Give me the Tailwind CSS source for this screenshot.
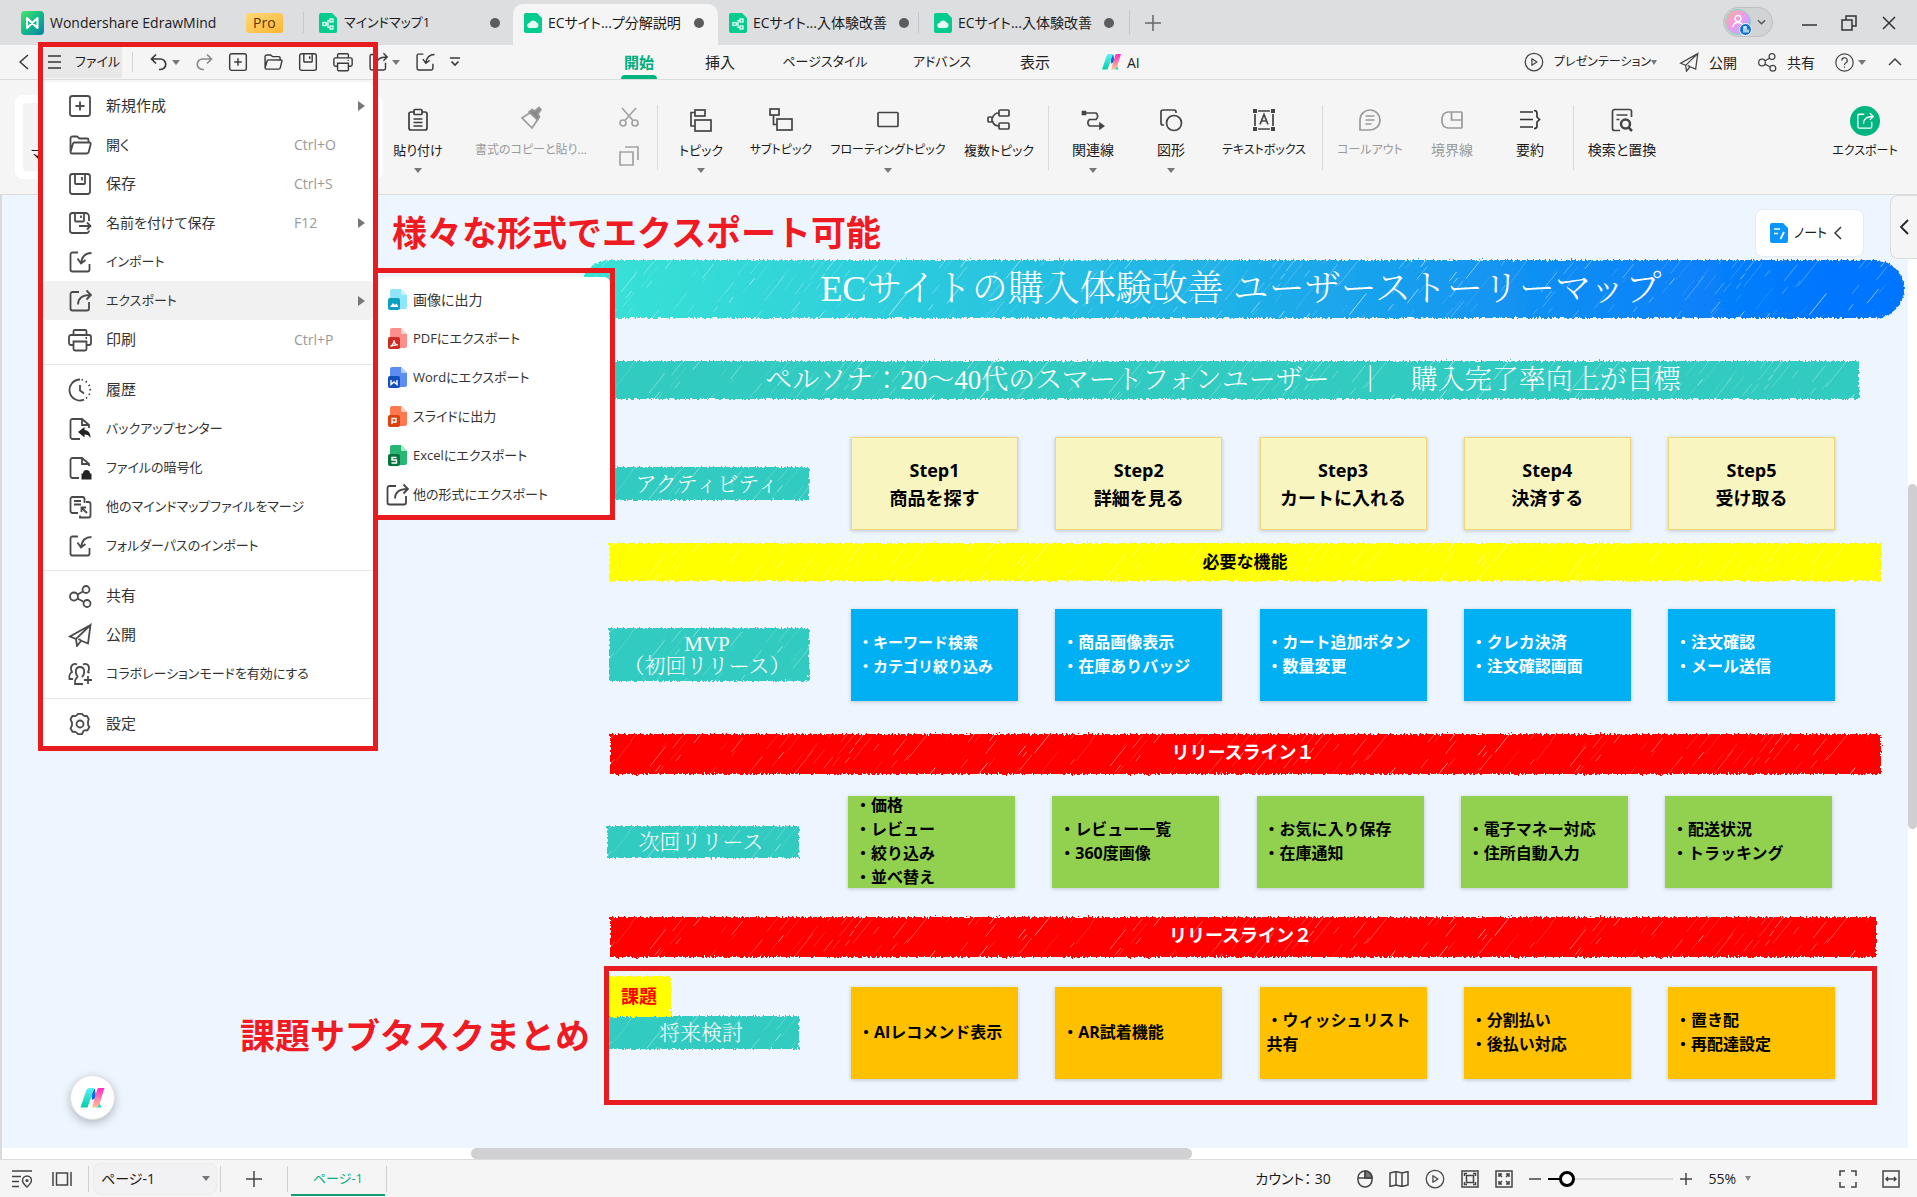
<!DOCTYPE html>
<html lang="ja">
<head>
<meta charset="utf-8">
<title>Wondershare EdrawMind</title>
<script src="https://cdn.jsdelivr.net/npm/@tailwindcss/browser@4"></script>
</head>
<body class="h-screen overflow-hidden bg-[#f5f5f5] font-['Open_Sans','Noto_Sans_CJK_JP',sans-serif] text-[#1a1a1a]">

<!-- shared icons -->
<svg class="absolute size-0" aria-hidden="true">
  <defs>
    <filter id="rough" x="-2%" y="-20%" width="104%" height="140%">
      <feTurbulence type="fractalNoise" baseFrequency="0.5 0.3" numOctaves="3" seed="4"/>
      <feDisplacementMap in="SourceGraphic" scale="5" xChannelSelector="R" yChannelSelector="G"/>
    </filter>
    <pattern id="streaks" width="460" height="64" patternUnits="userSpaceOnUse"></pattern>
    <linearGradient id="gTitle" x1="0" x2="1"><stop offset="0" stop-color="#38e2d4"/><stop offset=".12" stop-color="#33d9d8"/><stop offset=".5" stop-color="#1fb0e8"/><stop offset=".75" stop-color="#0f8cf5"/><stop offset=".95" stop-color="#0075ff"/></linearGradient>
    <linearGradient id="gLogo" x1="0" y1="0" x2="1" y2="1"><stop offset="0" stop-color="#4be36a"/><stop offset=".5" stop-color="#12b98a"/><stop offset="1" stop-color="#0a7fa8"/></linearGradient>
    <linearGradient id="gT" x1="0" y1="0" x2="0" y2="1"><stop offset="0" stop-color="#5ff0f5"/><stop offset="1" stop-color="#04cfa8"/></linearGradient>
    <linearGradient id="gP" x1="0" y1="0" x2="0" y2="1"><stop offset="0" stop-color="#fb2bc8"/><stop offset="1" stop-color="#ffc78f"/></linearGradient>
    <linearGradient id="gA" x1="0" y1="0" x2="1" y2="1"><stop offset="0" stop-color="#f9b08e"/><stop offset=".5" stop-color="#ef9bf0"/><stop offset="1" stop-color="#8fb8ff"/></linearGradient>
  </defs>
  <symbol id="i-new" viewBox="0 0 24 24"><rect x="2" y="2" width="20" height="20" rx="2.5"/><path d="M12 7.5v9M7.500 12h9"/></symbol>
  <symbol id="i-open" viewBox="0 0 24 24"><path d="M2.500 19V5.500a2 2 0 0 1 2-2h4.500l2.500 2h7.500a1.500 1.500 0 0 1 1.500 1.500v2.500M2.500 19l2.500-8.500a1.500 1.500 0 0 1 1.400-1H21.500a1.200 1.200 0 0 1 1.200 1.500l-2 8a2 2 0 0 1-1.900 1.500H4a1.500 1.500 0 0 1-1.500-1.500z"/></symbol>
  <symbol id="i-save" viewBox="0 0 24 24"><rect x="2" y="2" width="20" height="20" rx="2.500"/><path d="M7 2v9a1 1 0 0 0 1 1h8a1 1 0 0 0 1-1V2M14 5v3.500"/></symbol>
  <symbol id="i-saveas" viewBox="0 0 24 24"><path d="M21 10V5.500a3.500 3.500 0 0 0-3.500-3.500h-13A2.500 2.500 0 0 0 2 4.500v15A2.500 2.500 0 0 0 4.500 22h14a2.500 2.500 0 0 0 2.500-2.500M7 2v7.500a1 1 0 0 0 1 1h7a1 1 0 0 0 1-1V2M13 4.500V7M11 15h11M19 11.500l3.500 3.500-3.500 3.500"/></symbol>
  <symbol id="i-import" viewBox="0 0 24 24"><path d="M10 2.500H4.500a2 2 0 0 0-2 2v15a2 2 0 0 0 2 2h15a2 2 0 0 0 2-2V14M23.500 3c-5 0-9.500 3-10.500 10M9.500 8.500l3.500 5 4.500-3.500"/></symbol>
  <symbol id="i-export" viewBox="0 0 24 24"><path d="M11 3H4.500a2 2 0 0 0-2 2v14.500a2 2 0 0 0 2 2h14.500a2 2 0 0 0 2-2V13M10 15.500C10 9.500 14 6 22.500 6M18.500 1.500L23 6l-4.500 4.500"/></symbol>
  <symbol id="i-print" viewBox="0 0 24 24"><path d="M5.500 17H3a2 2 0 0 1-2-2V9a2 2 0 0 1 2-2h18a2 2 0 0 1 2 2v6a2 2 0 0 1-2 2h-2.500M5.500 7V3.500a1.500 1.500 0 0 1 1.500-1.500h10a1.500 1.500 0 0 1 1.500 1.500V7M5.500 13.500h13V21a1.500 1.500 0 0 1-1.500 1.500H7A1.500 1.500 0 0 1 5.500 21zM17.500 10h1.500"/></symbol>
  <symbol id="i-history" viewBox="0 0 24 24"><path d="M12 1.500a10.500 10.500 0 1 0 4 20.200M12 7v5.500l4 3"/><path stroke-dasharray="1.500 3" d="M13.500 1.600A10.500 10.500 0 0 1 17 21"/></symbol>
  <symbol id="i-backup" viewBox="0 0 24 24"><path d="M12 22H4.500a2 2 0 0 1-2-2V4a2 2 0 0 1 2-2h9.500l7 6v3M14 2.500V8h6.500"/><path fill="currentColor" stroke="none" d="M10 15l6.500-5v3c4 .5 6 3 6 8-1.500-2.500-3-3.500-6-3.500v3z"/></symbol>
  <symbol id="i-lock" viewBox="0 0 24 24"><path d="M11 22H4.500a2 2 0 0 1-2-2V4a2 2 0 0 1 2-2h9.500l7 6v2M14 2.500V8h6.500"/><path fill="currentColor" stroke="none" d="M13.500 17.500h1.500a3.500 3.500 0 0 1 7 0h1.500v6h-10z"/></symbol>
  <symbol id="i-merge" viewBox="0 0 24 24"><path d="M10 18H4.500a2 2 0 0 1-2-2V4a2 2 0 0 1 2-2h10a2 2 0 0 1 2 2v4M6 6h7M6 9.500h7M18 7h2.500a2 2 0 0 1 2 2v11.500a2 2 0 0 1-2 2H12v-2M19 18l-5-5M13.500 17v-4.500H18"/></symbol>
  <symbol id="i-share" viewBox="0 0 24 24"><circle cx="6" cy="12.500" r="4"/><circle cx="18" cy="5.500" r="3.500"/><circle cx="19" cy="19.500" r="3.500"/><path d="M9.500 10.500l5.500-3M9.500 14.500l6.500 3.500"/></symbol>
  <symbol id="i-send" viewBox="0 0 24 24"><path d="M22.500 2L2 13.500l6 2.500L22.500 2l-2.500 18.500-6-2.500-3.500-2M8 16l1 7 4-5"/></symbol>
  <symbol id="i-collab" viewBox="0 0 24 24"><path d="M9 2.500C6 1 2.500 3 3 7c.3 2 1 3 1 3-2.500 1.500-3 5-2.500 7H5M15 2.500c3-1.500 6.500 0 6 4.500-.3 2-1 3-1 3l1.500 1M10 15c-3-3-3.500-10 2-10s5 7 2 10M10 15c-2 1-3.500 3-3 7h8M20 14v8M16 18h8"/></symbol>
  <symbol id="i-gear" viewBox="0 0 24 24"><path d="M8.500 3.500L10 1.800h4l1.500 1.700 1 .6 2.300-.3 2 3.500-.8 2.100v1.300l.1 2.600 1.400 1.500-2 3.500-2.500-.1-1.500.8L14 22.200h-4l-1.500-1.700-1.500-.8-2.500.1-2-3.500L4 13.500v-3L2.500 7.300l2-3.500 2.500.3z" stroke-linejoin="round"/><circle cx="12" cy="12" r="3.500"/></symbol>
  <symbol id="i-play" viewBox="0 0 24 24"><circle cx="12" cy="12" r="10.500"/><path d="M9.500 8v8l6-4z" stroke-linejoin="round"/></symbol>
  <symbol id="ai" viewBox="0 0 24 20"><path fill="#0a6bd8" d="M10.500 1h4l1 9-4 2z"/><path fill="url(#gT)" d="M9 0h5L7 19.500H0L5.500 3Q6.500 0 9 0z"/><path fill="#12dcd0" d="M17 10l4 9.500h-5z"/><path fill="url(#gP)" d="M18 0h6l-5 16q-1.500 3.500-4 3.500h-3.500L16.500 2Q17 0 18 0z"/></symbol>
  <symbol id="doc-map" viewBox="0 0 18 20"><path fill="#04cb8e" d="M2 0h11l5 5v13a2 2 0 0 1-2 2H2a2 2 0 0 1-2-2V2a2 2 0 0 1 2-2z"/><g fill="none" stroke="#fff" stroke-width="1.200"><path d="M7 11h2M11 7.500H9v7h2"/><rect x="4" y="9.500" width="3" height="3"/><rect x="11" y="6" width="3" height="3"/><rect x="11" y="13" width="3" height="3"/></g></symbol>
  <symbol id="doc-cloud" viewBox="0 0 18 20"><path fill="#04cb8e" d="M2 0h11l5 5v13a2 2 0 0 1-2 2H2a2 2 0 0 1-2-2V2a2 2 0 0 1 2-2z"/><path fill="#e6fbf3" d="M6 15a2.500 2.500 0 0 1-.5-5 3.800 3.800 0 0 1 7-.5A2.800 2.800 0 0 1 12 15z"/></symbol>
</svg>

<div class="relative flex h-full flex-col">

  <!-- title bar -->
  <header class="flex h-[45px] shrink-0 items-stretch bg-[#dddee0] text-[14px] [font-feature-settings:'palt']">
    <div class="flex w-[303px] items-center pl-[21px]">
      <svg class="h-6 w-[23px]" viewBox="0 0 23 24"><rect width="23" height="24" rx="4" fill="url(#gLogo)"/><path d="M6 7v10l10.500-10v10L6 7z" fill="none" stroke="#fff" stroke-width="2" stroke-linejoin="round"/></svg>
      <span class="ml-[6px] w-[196px] whitespace-nowrap">Wondershare EdrawMind</span>
      <span class="h-5 rounded-[3px] bg-linear-to-br from-[#ffd976] to-[#ffb52b] px-[7px] leading-5 font-medium text-[#5a3300]">Pro</span>
    </div>
    <div class="my-3 w-px bg-[#c6c7c9]"></div>
    <button class="flex w-[209px] items-center pl-[15px]"><svg class="h-5 w-[18px]"><use href="#doc-map"/></svg><span class="ml-[7px] flex-1 text-left text-[13px]">マインドマップ1</span><i class="mr-[13px] size-[10px] rounded-full bg-[#5c5c5c]"></i></button>
    <button class="mt-1 flex w-[205px] items-center rounded-t-[10px] bg-[#f5f5f5] pb-1 pl-[11px]"><svg class="h-5 w-[18px]"><use href="#doc-cloud"/></svg><span class="ml-[6px] flex-1 text-left whitespace-nowrap">ECサイト...プ分解説明</span><i class="mr-[14px] size-[10px] rounded-full bg-[#5c5c5c]"></i></button>
    <button class="flex w-[200px] items-center pl-[11px]"><svg class="h-5 w-[18px]"><use href="#doc-map"/></svg><span class="ml-[6px] flex-1 text-left whitespace-nowrap">ECサイト...入体験改善</span><i class="mr-[9px] size-[10px] rounded-full bg-[#5c5c5c]"></i></button>
    <div class="my-3 w-px bg-[#c6c7c9]"></div>
    <button class="flex w-[210px] items-center pl-[15px]"><svg class="h-5 w-[18px]"><use href="#doc-cloud"/></svg><span class="ml-[6px] flex-1 text-left whitespace-nowrap">ECサイト...入体験改善</span><i class="mr-[15px] size-[10px] rounded-full bg-[#5c5c5c]"></i></button>
    <div class="my-[10px] w-px bg-[#c6c7c9]"></div>
    <button class="flex w-[45px] items-center justify-center" aria-label="新しいタブ"><svg class="size-4" viewBox="0 0 16 16" stroke="#666" stroke-width="1.500"><path d="M8 0v16M0 8h16"/></svg></button>
    <div class="flex-1"></div>
    <button class="mt-[7px] flex h-[30px] w-[50px] items-center rounded-full border border-[#bfc0c2] bg-[#d2d3d5]" aria-label="アカウント">
      <svg class="h-[28px] w-[29px]" viewBox="0 0 29 28"><circle cx="14" cy="14" r="12.500" fill="url(#gA)" stroke="#7fd9c8"/><circle cx="14" cy="10.500" r="3" fill="none" stroke="#fff" stroke-width="1.300"/><path d="M9 19c0-6 10-6 10 0" fill="none" stroke="#fff" stroke-width="1.300"/><circle cx="21.500" cy="21.500" r="6" fill="#1272d8" stroke="#fff"/><path d="M20 24.500v-5.500h2v5.500M24 24.500v-3" stroke="#fff" stroke-width="1.300" fill="none"/></svg>
      <svg class="ml-[4px] h-2 w-[9px]" viewBox="0 0 10 8" fill="none" stroke="#555" stroke-width="1.500"><path d="M1 2l4 4 4-4"/></svg>
    </button>
    <button class="ml-[16px] w-[40px] pt-1" aria-label="最小化"><svg class="mx-auto h-4 w-[15px]" viewBox="0 0 15 16" stroke="#333" stroke-width="1.500"><path d="M0 8h15"/></svg></button>
    <button class="w-[40px]" aria-label="元に戻す"><svg class="mx-auto size-4" viewBox="0 0 16 16" fill="none" stroke="#333" stroke-width="1.500"><path d="M1 5h10v10H1zM5 5V1h10v10h-4"/></svg></button>
    <button class="mr-[8px] w-[40px]" aria-label="閉じる"><svg class="mx-auto size-[14px]" viewBox="0 0 14 14" stroke="#333" stroke-width="1.500"><path d="M1 1l12 12M13 1L1 13"/></svg></button>
  </header>

  <!-- menu bar -->
  <nav class="flex h-[35px] shrink-0 items-center border-b border-[#dcdcdc] text-[15px] text-[#222] [font-feature-settings:'palt']">
    <button class="ml-[19px] w-[25px]" aria-label="戻る"><svg class="h-4 w-[10px]" viewBox="0 0 10 16" fill="none" stroke="#333" stroke-width="1.500"><path d="M9 1L1 8l8 7"/></svg></button>
    <button class="flex h-[31px] w-[78px] items-center bg-[#e8e8e8] pl-[4px] text-[13px] whitespace-nowrap"><svg class="h-4 w-[13px] shrink-0" viewBox="0 0 13 16" stroke="#333" stroke-width="1.500"><path d="M0 2h13M0 8h13M0 14h13"/></svg><span class="ml-[14px]">ファイル</span></button>
    <div class="ml-[10px] h-5 w-px bg-[#d4d4d4]"></div>
    <div class="flex items-center text-[#3a3a3a] [&_svg]:fill-none [&_svg]:stroke-current [&_svg]:stroke-[1.700px]">
      <button class="ml-[17px]" aria-label="元に戻す"><svg class="size-[18px]" viewBox="0 0 18 18"><path d="M6 1.500L1.500 6 6 10.500M1.500 6h9a5 5 0 0 1 0 10.500H9"/></svg></button>
      <span class="ml-[4px] border-x-4 border-t-[5px] border-x-transparent border-t-[#777]"></span>
      <button class="ml-[15px] text-[#8a8a8a]" aria-label="やり直し"><svg class="size-[18px]" viewBox="0 0 18 18"><path d="M12 1.500L16.500 6 12 10.500M16.500 6H7.500a5 5 0 0 0 0 10.500H9"/></svg></button>
      <button class="ml-[15px]" aria-label="新規作成"><svg class="size-5"><use href="#i-new"/></svg></button>
      <button class="ml-[15px]" aria-label="開く"><svg class="size-5"><use href="#i-open"/></svg></button>
      <button class="ml-[15px]" aria-label="保存"><svg class="size-5"><use href="#i-save"/></svg></button>
      <button class="ml-[15px]" aria-label="印刷"><svg class="size-5"><use href="#i-print"/></svg></button>
      <button class="ml-[15px]" aria-label="エクスポート"><svg class="size-5"><use href="#i-export"/></svg></button>
      <span class="ml-[4px] border-x-4 border-t-[5px] border-x-transparent border-t-[#777]"></span>
      <button class="ml-[15px]" aria-label="インポート"><svg class="size-5"><use href="#i-import"/></svg></button>
      <button class="ml-[15px]" aria-label="カスタマイズ"><svg class="h-3 w-[10px]" viewBox="0 0 10 12"><path d="M0 2h10M1.500 5.500L5 9l3.500-3.500"/></svg></button>
    </div>
    <div class="ml-[139px] flex h-full items-stretch [&>button]:whitespace-nowrap">
      <button class="relative w-[80px] font-semibold text-[#00ad7c]">開始<span class="absolute bottom-0 left-[22px] h-1 w-[36px] rounded-t bg-[#00b482]"></span></button>
      <button class="w-[82px]">挿入</button>
      <button class="w-[128px] text-[13px]">ページスタイル</button>
      <button class="w-[106px] text-[13px]">アドバンス</button>
      <button class="w-[80px]">表示</button>
      <button class="ml-[15px] flex w-[80px] items-center gap-[6px] pl-[12px] text-[14px]"><svg class="h-4 w-[19px]"><use href="#ai"/></svg>AI</button>
    </div>
    <div class="flex-1"></div>
    <div class="flex items-center whitespace-nowrap text-[14px] [&_svg]:fill-none [&_svg]:stroke-[#444] [&_svg]:stroke-[1.500px]">
      <button class="flex items-center"><svg class="mr-[10px] size-5"><use href="#i-play"/></svg><span class="w-[94px] text-left text-[12px]">プレゼンテーション</span><span class="ml-[3px] border-x-[3px] border-t-[5px] border-x-transparent border-t-[#777]"></span></button>
      <button class="ml-[22px] flex items-center"><svg class="mr-[10px] size-5"><use href="#i-send"/></svg>公開</button>
      <button class="ml-[20px] flex items-center"><svg class="mr-[10px] size-5"><use href="#i-share"/></svg>共有</button>
      <button class="ml-[20px] flex items-center" aria-label="ヘルプ"><svg class="size-[19px]" viewBox="0 0 24 24"><circle cx="12" cy="12" r="11"/><path d="M8.500 9.500a3.500 3.500 0 1 1 5 3.200q-1.500.8-1.500 2.300M12 17v1.500"/></svg><span class="ml-1 border-x-4 border-t-[5px] border-x-transparent border-t-[#777]"></span></button>
      <button class="mr-[15px] ml-[22px]" aria-label="折りたたむ"><svg class="h-2 w-[14px]" viewBox="0 0 14 8"><path d="M1 7l6-6 6 6"/></svg></button>
    </div>
  </nav>

  <!-- ribbon -->
  <section class="flex h-[115px] shrink-0 border-b border-[#dcdcdc] text-[14px] [font-feature-settings:'palt'] [&_button]:whitespace-nowrap [&_svg]:fill-none [&_svg]:stroke-current [&_svg]:stroke-[1.700px]">
    <div class="my-[15px] ml-[15px] w-[368px] rounded-lg bg-white p-2"><button class="h-full w-[90px] rounded bg-[#f3f3f3] pt-8 pl-2 text-left">マインドマップ</button></div>
    <button class="flex w-[70px] flex-col items-center pt-[28px] text-[13px]"><svg class="size-6 text-[#3c3c3c]" viewBox="0 0 24 24"><rect x="3" y="4" width="18" height="18" rx="2"/><rect x="8" y="1.500" width="8" height="5" rx="1" class="fill-[#f5f5f5]"/><path d="M7.500 11h9M7.500 14.500h9M7.500 18h9"/></svg><span class="mt-[8px] leading-5">貼り付け</span><i class="mt-[8px] border-x-4 border-t-[5px] border-x-transparent border-t-[#777]"></i></button>
    <button class="flex w-[156px] flex-col items-center pt-[26px] text-[12px] text-[#9a9a9a]" disabled><svg class="size-6" viewBox="0 0 24 24"><path d="M3 12l9-6 7 7-6 9z"/><path fill="#888" d="M10 6l3-2.500 3 1.500 4-3.500 2 2-3 4.500 1.500 3-2 3z"/></svg><span class="mt-[10px] leading-5">書式のコピーと貼り...</span></button>
    <div class="flex w-[40px] flex-col items-center gap-[19px] pt-[27px] text-[#a3a3a3]">
      <button aria-label="切り取り" disabled><svg class="block size-5" viewBox="0 0 20 20"><circle cx="4" cy="16" r="3"/><circle cx="16" cy="16" r="3"/><path d="M3 1l11 12.500M17 1L6 13.500"/></svg></button>
      <button aria-label="コピー" disabled><svg class="block size-5" viewBox="0 0 20 20"><path d="M1 6h13v13H1zM6 1h13v13"/></svg></button>
    </div>
    <div class="mt-[25px] mr-[3px] ml-2 h-[65px] w-px bg-[#dadada]"></div>
    <button class="flex w-[80px] flex-col items-center pt-[28px]"><svg class="size-6 text-[#444]" viewBox="0 0 24 24"><rect x="6" y="2" width="10" height="6"/><rect x="6" y="12" width="16" height="11"/><path d="M6 4.500H2V18h4"/></svg><span class="mt-[8px] text-[13px] leading-5">トピック</span><i class="mt-[8px] border-x-4 border-t-[5px] border-x-transparent border-t-[#777]"></i></button>
    <button class="flex w-[80px] flex-col items-center pt-[28px]"><svg class="size-6 text-[#444]" viewBox="0 0 24 24"><rect x="1" y="1" width="9" height="6"/><rect x="8" y="11" width="15" height="11"/><path d="M4.500 7v9.500H8"/></svg><span class="mt-[8px] text-[12px] leading-5">サブトピック</span></button>
    <button class="flex w-[134px] flex-col items-center pt-[28px]"><svg class="size-6 text-[#444]" viewBox="0 0 24 24"><rect x="2" y="4.500" width="20" height="14" rx="1"/></svg><span class="mt-[8px] text-[12px] leading-5">フローティングトピック</span><i class="mt-[8px] border-x-4 border-t-[5px] border-x-transparent border-t-[#777]"></i></button>
    <button class="flex w-[88px] flex-col items-center pt-[28px]"><svg class="size-6 text-[#444]" viewBox="0 0 24 24"><rect x="12" y="2" width="10" height="6" rx="1"/><rect x="12" y="15" width="10" height="6" rx="1"/><rect x="1" y="9" width="4" height="5" rx="1"/><path d="M12 5C7 5 6 8 5.500 10M12 18c-5 0-6-3-6.500-5"/></svg><span class="mt-[8px] text-[13px] leading-5">複数トピック</span></button>
    <div class="mr-[6px] ml-[5px] mt-[25px] h-[65px] w-px bg-[#dadada]"></div>
    <button class="flex w-[76px] flex-col items-center pt-[28px]"><svg class="size-6 text-[#444]" viewBox="0 0 24 24"><path d="M3 5h12a4 4 0 0 1 0 6.500H8.500a4 4 0 0 0 0 6.500H21"/><path class="fill-[#444]" d="M19 15.500l3.500 2.500-3.500 2.500zM1.500 3.500h3v3h-3z"/></svg><span class="mt-[8px] leading-5">関連線</span><i class="mt-[8px] border-x-4 border-t-[5px] border-x-transparent border-t-[#777]"></i></button>
    <button class="flex w-[80px] flex-col items-center pt-[28px]"><svg class="size-6 text-[#444]" viewBox="0 0 24 24"><path d="M5 17H4a2 2 0 0 1-2-2V4a2 2 0 0 1 2-2h11a2 2 0 0 1 2 2v1"/><circle cx="15" cy="15" r="7.500"/></svg><span class="mt-[8px] leading-5">図形</span><i class="mt-[8px] border-x-4 border-t-[5px] border-x-transparent border-t-[#777]"></i></button>
    <button class="flex w-[106px] flex-col items-center pt-[28px]"><svg class="size-6 text-[#444]" viewBox="0 0 24 24"><path d="M6 3h12M6 21h12M3 6v12M21 6v12"/><path d="M8 16.500l4-10 4 10M9.500 13h5"/><path class="fill-[#444] stroke-none" d="M1 1h4v4H1zM19 1h4v4h-4zM1 19h4v4H1zM19 19h4v4h-4z"/></svg><span class="mt-[8px] text-[12px] leading-5">テキストボックス</span></button>
    <div class="mx-[5px] mt-[25px] h-[65px] w-px bg-[#dadada]"></div>
    <button class="flex w-[84px] flex-col items-center pt-[28px] text-[#9a9a9a]" disabled><svg class="size-6" viewBox="0 0 24 24"><path d="M2 22V11.500A10 10 0 1 1 12 22zM7.500 8h9M7.500 12h9M7.500 16h6"/></svg><span class="mt-[8px] text-[12px] leading-5">コールアウト</span></button>
    <button class="flex w-[80px] flex-col items-center pt-[28px] text-[#9a9a9a]" disabled><svg class="size-6" viewBox="0 0 24 24"><path d="M8 4h13a1 1 0 0 1 1 1v14a1 1 0 0 1-1 1H8a7 7 0 0 1-6-6v-4a7 7 0 0 1 6-6zM11.500 4v8H22"/></svg><span class="mt-[8px] leading-5">境界線</span></button>
    <button class="flex w-[76px] flex-col items-center pt-[28px]"><svg class="size-6 text-[#333]" viewBox="0 0 24 24"><path d="M2 4h13M2 11.500h13M2 19h13M16 2.500q3 0 3 2.500v4l2.500 2.500L19 14v4q0 2.500-3 2.500"/></svg><span class="mt-[8px] leading-5">要約</span></button>
    <div class="mr-1 ml-[5px] mt-[25px] h-[65px] w-px bg-[#dadada]"></div>
    <button class="flex w-[88px] flex-col items-center pt-[28px]"><svg class="size-6 text-[#444]" viewBox="0 0 24 24"><path d="M21.500 9V3.500a2 2 0 0 0-2-2h-15a2 2 0 0 0-2 2v17a2 2 0 0 0 2 2H10M6.500 7h11M6.500 11.500h3"/><circle cx="15.500" cy="16" r="4.500" stroke-width="2.500"/><path d="M18.500 19.500L22 23" stroke-width="2.500"/></svg><span class="mt-[8px] leading-5">検索と置換</span></button>
    <div class="flex-1"></div>
    <button class="mr-[10px] flex w-[84px] flex-col items-center pt-[26px]"><span class="flex size-[30px] items-center justify-center rounded-full bg-[#00b580] text-white"><svg class="mb-px size-[18px]"><use href="#i-export"/></svg></span><span class="mt-[5px] text-[12px] leading-5">エクスポート</span></button>
  </section>

  <!-- canvas -->
  <main class="relative min-h-0 flex-1 overflow-hidden bg-[#edf5ff] shadow-[inset_2px_0_#dadada]">
    <!-- banner -->
    <div class="absolute top-[65px] left-[581px] flex h-[58px] w-[1323px] items-center justify-center font-['Liberation_Serif','Noto_Serif_CJK_JP','Noto_Sans_CJK_JP',serif] text-[36px] font-light text-white">
      <svg class="absolute inset-0 size-full overflow-visible"><rect width="100%" height="100%" rx="29" fill="url(#gTitle)" filter="url(#rough)"/><rect width="100%" height="100%" rx="29" fill="url(#streaks)"/></svg>
      <h1 class="relative pr-[3px] whitespace-nowrap">ECサイトの購入体験改善 ユーザーストーリーマップ</h1>
    </div>
    <div class="absolute top-[166px] left-[609px] flex h-[38px] w-[1250px] items-center justify-center font-['Liberation_Serif','Noto_Serif_CJK_JP','Noto_Sans_CJK_JP',serif] text-[27px] font-light text-white">
      <svg class="absolute inset-0 size-full overflow-visible"><rect width="100%" height="100%" fill="#31cbc1" filter="url(#rough)"/><rect width="100%" height="100%" fill="url(#streaks)"/></svg>
      <p class="relative pr-[22px] whitespace-nowrap">ペルソナ：20～40代のスマートフォンユーザー　｜　購入完了率向上が目標</p>
    </div>

    <!-- row labels -->
    <div class="font-['Liberation_Serif','Noto_Serif_CJK_JP','Noto_Sans_CJK_JP',serif] text-[21px] leading-[22px] font-light text-white">
      <div class="absolute top-[272px] left-[609px] flex h-[33px] w-[200px] items-center justify-center pr-1"><svg class="absolute inset-0 size-full overflow-visible"><rect width="100%" height="100%" fill="#31cbc1" filter="url(#rough)"/><rect width="100%" height="100%" fill="url(#streaks)"/></svg><span class="relative">アクティビティ</span></div>
      <div class="absolute top-[433px] left-[609px] flex h-[53px] w-[200px] items-center justify-center pr-1 text-center"><svg class="absolute inset-0 size-full overflow-visible"><rect width="100%" height="100%" fill="#31cbc1" filter="url(#rough)"/><rect width="100%" height="100%" fill="url(#streaks)"/></svg><span class="relative">MVP<br>（初回リリース）</span></div>
      <div class="absolute top-[631px] left-[607px] flex h-[32px] w-[192px] items-center justify-center pr-1"><svg class="absolute inset-0 size-full overflow-visible"><rect width="100%" height="100%" fill="#31cbc1" filter="url(#rough)"/><rect width="100%" height="100%" fill="url(#streaks)"/></svg><span class="relative">次回リリース</span></div>
      <div class="absolute top-[821px] left-[607px] flex h-[33px] w-[192px] items-center justify-center pr-1"><svg class="absolute inset-0 size-full overflow-visible"><rect width="100%" height="100%" fill="#31cbc1" filter="url(#rough)"/><rect width="100%" height="100%" fill="url(#streaks)"/></svg><span class="relative">将来検討</span></div>
    </div>

    <!-- steps -->
    <div class="absolute top-[242px] left-[851px] flex w-[984px] justify-between text-center text-[18px] leading-7 font-bold text-black [&>div]:flex [&>div]:h-[93px] [&>div]:w-[167px] [&>div]:items-center [&>div]:justify-center [&>div]:border [&>div]:border-[#f4d57a] [&>div]:bg-[#f9f5c0] [&>div]:shadow-[0_1px_4px_rgba(0,0,0,.2)]">
      <div>Step1<br>商品を探す</div><div>Step2<br>詳細を見る</div><div>Step3<br>カートに入れる</div><div>Step4<br>決済する</div><div>Step5<br>受け取る</div>
    </div>

    <!-- bands -->
    <div class="absolute top-[348px] left-[609px] flex h-[38px] w-[1272px] items-center justify-center text-[17px] leading-6 font-bold text-black"><svg class="absolute inset-0 size-full overflow-visible"><rect width="100%" height="100%" fill="#ffff00" filter="url(#rough)"/><rect width="100%" height="100%" fill="url(#streaks)"/></svg><span class="relative">必要な機能</span></div>
    <div class="absolute top-[539px] left-[610px] flex h-[40px] w-[1271px] items-center justify-center pr-[5px] pb-[3px] text-[18px] font-bold text-white"><svg class="absolute inset-0 size-full overflow-visible"><rect width="100%" height="100%" fill="#ff0000" filter="url(#rough)"/><rect width="100%" height="100%" fill="url(#streaks)"/></svg><span class="relative">リリースライン１</span></div>
    <div class="absolute top-[722px] left-[610px] flex h-[40px] w-[1266px] items-center justify-center pr-[5px] pb-[3px] text-[18px] font-bold text-white"><svg class="absolute inset-0 size-full overflow-visible"><rect width="100%" height="100%" fill="#ff0000" filter="url(#rough)"/><rect width="100%" height="100%" fill="url(#streaks)"/></svg><span class="relative">リリースライン２</span></div>

    <!-- MVP -->
    <div class="absolute top-[414px] left-[851px] flex w-[984px] justify-between text-[16px] leading-6 font-bold text-white [&>div]:flex [&>div]:h-[92px] [&>div]:w-[167px] [&>div]:items-center [&>div]:bg-[#00b0f3] [&>div]:px-[7px] [&>div]:pb-[2px] [&>div]:whitespace-nowrap [&>div]:shadow-[0_1px_4px_rgba(0,0,0,.2)]">
      <div class="text-[15px]">・キーワード検索<br>・カテゴリ絞り込み</div><div>・商品画像表示<br>・在庫ありバッジ</div><div>・カート追加ボタン<br>・数量変更</div><div>・クレカ決済<br>・注文確認画面</div><div>・注文確認<br>・メール送信</div>
    </div>
    <!-- next release -->
    <div class="absolute top-[601px] left-[848px] flex w-[984px] justify-between text-[16px] leading-6 font-bold text-black [&>div]:flex [&>div]:h-[92px] [&>div]:w-[167px] [&>div]:items-center [&>div]:bg-[#92d050] [&>div]:px-[7px] [&>div]:pb-[2px] [&>div]:whitespace-nowrap [&>div]:shadow-[0_1px_4px_rgba(0,0,0,.2)]">
      <div>・価格<br>・レビュー<br>・絞り込み<br>・並べ替え</div><div>・レビュー一覧<br>・360度画像</div><div>・お気に入り保存<br>・在庫通知</div><div>・電子マネー対応<br>・住所自動入力</div><div>・配送状況<br>・トラッキング</div>
    </div>
    <!-- future -->
    <div class="absolute top-[792px] left-[851px] flex w-[984px] justify-between text-[16px] leading-6 font-bold text-black [&>div]:flex [&>div]:h-[92px] [&>div]:w-[167px] [&>div]:items-center [&>div]:bg-[#ffc000] [&>div]:px-[7px] [&>div]:pb-[2px] [&>div]:whitespace-nowrap [&>div]:shadow-[0_1px_4px_rgba(0,0,0,.2)]">
      <div>・AIレコメンド表示</div><div>・AR試着機能</div><div>・ウィッシュリスト<br>共有</div><div>・分割払い<br>・後払い対応</div><div>・置き配<br>・再配達設定</div>
    </div>
    <div class="absolute top-[781px] left-[607px] flex h-[41px] w-[64px] items-center justify-center text-[18px] font-bold text-[#ff0000]"><svg class="absolute inset-0 size-full overflow-visible"><rect width="100%" height="100%" fill="#ffff00" filter="url(#rough)"/></svg><span class="relative">課題</span></div>

    <!-- annotations -->
    <div class="absolute top-[771px] left-[604px] h-[139px] w-[1273px] border-[5px] border-[#e81c1e]"></div>
    <p class="absolute top-[12px] left-[392px] text-[35px] leading-[52px] font-bold whitespace-nowrap text-[#f01a22]">様々な形式でエクスポート可能</p>
    <p class="absolute top-[815px] left-[240px] text-[35px] leading-[52px] font-bold whitespace-nowrap text-[#f01a22]">課題サブタスクまとめ</p>

    <button class="absolute bottom-[39px] left-[70px] flex size-[45px] items-center justify-center rounded-full border border-[#e2e2e2] bg-white shadow-[0_3px_10px_rgba(0,0,0,.25)]" aria-label="AI アシスタント"><svg class="h-5 w-[25px]"><use href="#ai"/></svg></button>

    <!-- scroll bars -->
    <div class="absolute top-0 right-0 bottom-0 w-[9px] bg-white"><div class="mt-[289px] h-[345px] rounded-full bg-[#cfcfd1]"></div></div>
    <div class="absolute right-0 bottom-0 left-[2px] h-[11px] bg-white"><div class="ml-[469px] h-full w-[721px] rounded-full bg-[#d1d1d3]"></div></div>

    <button class="absolute top-[14px] right-[53px] flex h-[48px] w-[109px] items-center rounded-lg border border-[#e8ecf2] bg-white pl-[14px] text-[13px] whitespace-nowrap [font-feature-settings:'palt']"><svg class="h-5 w-[18px] shrink-0" viewBox="0 0 18 20"><path fill="#0a95ff" d="M2 0h11l5 5v13a2 2 0 0 1-2 2H2a2 2 0 0 1-2-2V2a2 2 0 0 1 2-2z"/><path d="M4 6h6M4 10.500h4M10.500 16L14 9" stroke="#fff" stroke-width="1.700"/></svg><span class="ml-[6px] w-[34px] text-left">ノート</span><svg class="ml-[6px] h-[14px] w-2 shrink-0" viewBox="0 0 8 14" fill="none" stroke="#333" stroke-width="1.500"><path d="M7 1L1 7l6 6"/></svg></button>
    <button class="absolute top-0 right-0 flex h-[64px] w-[27px] items-center justify-center rounded-l-lg border border-r-0 border-[#dcdcdc] bg-[#f5f5f5]" aria-label="パネルを開く"><svg class="h-4 w-[9px]" viewBox="0 0 9 16" fill="none" stroke="#222" stroke-width="1.800"><path d="M8 1L1 8l7 7"/></svg></button>
  </main>

  <!-- status bar -->
  <footer class="flex h-[38px] shrink-0 items-center border-t border-[#dcdcdc] text-[14px] [font-feature-settings:'palt'] [&_svg]:fill-none [&_svg]:stroke-[#444] [&_svg]:stroke-[1.500px]">
    <button class="ml-3" aria-label="アウトライン"><svg class="h-[18px] w-5" viewBox="0 0 20 18"><path d="M0 1h20M0 6.500h9M0 11.500h7M0 16.500h7M15 17q-4.500-4-4.500-6.500a4.500 4.500 0 0 1 9 0Q19.500 13 15 17z"/><circle cx="15" cy="10.500" r=".8"/></svg></button>
    <button class="ml-5" aria-label="スライド"><svg class="h-[14px] w-5" viewBox="0 0 20 14"><path d="M1 0v14M19 0v14M4.500 1h11v12h-11z"/></svg></button>
    <div class="ml-4 h-[26px] w-px bg-[#cfcfcf]"></div>
    <label class="relative ml-1 flex h-8 w-[124px] items-center"><select aria-label="ページ" class="h-full w-full appearance-none rounded-lg border border-[#ececec] bg-[#f2f2f4] pl-[7px]"><option>ページ-1</option></select><span class="absolute right-[7px] border-x-4 border-t-[5px] border-x-transparent border-t-[#777]"></span></label>
    <div class="ml-[3px] h-[26px] w-px bg-[#cfcfcf]"></div>
    <button class="ml-[25px]" aria-label="ページを追加"><svg class="size-4" viewBox="0 0 16 16"><path d="M8 0v16M0 8h16"/></svg></button>
    <div class="ml-[25px] h-[26px] w-px bg-[#cfcfcf]"></div>
    <button class="mt-[2px] ml-[3px] h-[32px] w-[94px] border-b-2 border-[#159b76] text-[13px] text-[#00ad7c]">ページ-1</button>
    <div class="ml-px h-[26px] w-px bg-[#cfcfcf]"></div>
    <div class="flex-1"></div>
    <span class="w-[102px] whitespace-nowrap">カウント： 30</span>
    <div class="flex items-center gap-4">
      <button aria-label="マウスモード"><svg class="block h-[18px] w-4" viewBox="0 0 16 18"><path class="fill-[#777]" d="M8 1v7h7V7a6.500 6.500 0 0 0-7-6z"/><path d="M1 8a7 7 0 0 1 14 0v2a7 7 0 0 1-14 0zM1 8h14M8 1v7"/></svg></button>
      <button aria-label="マップ"><svg class="block h-4 w-5" viewBox="0 0 20 16"><path d="M1 2l6-1.500 6 1.500 6-1.500V14l-6 1.500L7 14l-6 1.500zM7 .5V14M13 2v13.500"/></svg></button>
      <button aria-label="再生"><svg class="block size-5"><use href="#i-play"/></svg></button>
      <button aria-label="選択範囲"><svg class="block size-[18px]" viewBox="0 0 18 18"><path d="M1 1h16v16H1zM5.500 5.500h7v7h-7zM3.500 6V3.500H6M12 3.500h2.500V6M14.500 12v2.500H12M6 14.500H3.500V12"/></svg></button>
      <button aria-label="全体表示"><svg class="block size-[18px]" viewBox="0 0 18 18"><path d="M1 1h16v16H1zM4 7V4h3M11 4h3v3M14 11v3h-3M7 14H4v-3M4 4l3 3M14 4l-3 3M14 14l-3-3M4 14l3-3"/></svg></button>
      <button aria-label="縮小"><svg class="block h-3 w-3" viewBox="0 0 12 12"><path d="M0 6h12"/></svg></button>
    </div>
    <input type="range" min="0" max="100" value="10" aria-label="ズーム" class="ml-[7px] h-4 w-[125px] appearance-none bg-[linear-gradient(90deg,#000_15px,#dcdcdc_15px)] bg-[length:100%_2px] bg-center bg-no-repeat [&::-webkit-slider-thumb]:size-4 [&::-webkit-slider-thumb]:appearance-none [&::-webkit-slider-thumb]:rounded-full [&::-webkit-slider-thumb]:border-[3px] [&::-webkit-slider-thumb]:border-black [&::-webkit-slider-thumb]:bg-white">
    <button class="ml-[7px]" aria-label="拡大"><svg class="block size-3" viewBox="0 0 12 12"><path d="M0 6h12M6 0v12"/></svg></button>
    <button class="ml-4 flex items-center">55%<span class="ml-[9px] border-x-[3px] border-t-[5px] border-x-transparent border-t-[#888]"></span></button>
    <button class="ml-[88px]" aria-label="全画面"><svg class="block size-[18px]" viewBox="0 0 18 18"><path d="M1 6V1h5M12 1h5v5M17 12v5h-5M6 17H1v-5"/></svg></button>
    <button class="mr-[17px] ml-[25px]" aria-label="幅に合わせる"><svg class="block size-[18px]" viewBox="0 0 18 18"><path d="M1 1h16v16H1zM4 9h10M6 7L4 9l2 2M12 7l2 2-2 2"/></svg></button>
  </footer>

  <!-- export submenu -->
  <div class="absolute top-[268px] left-[373px] h-[252px] w-[242px] border-[5px] border-[#e81c1e] pt-1">
    <ul class="h-full rounded-t-md bg-white py-[3px] text-[13px] text-[#333] [font-feature-settings:'palt'] [&_button]:flex [&_button]:h-[39px] [&_button]:w-full [&_button]:items-center [&_button]:gap-[6px] [&_button]:pl-[10px]">
      <li><button class="text-[14px]"><svg class="h-[21px] w-[19px]" viewBox="0 0 19 21"><path fill="#8fe6fb" d="M4 0h9l6 6v12a2 2 0 0 1-2 2H4a2 2 0 0 1-2-2V2a2 2 0 0 1 2-2z"/><path fill="#c9f3fc" d="M13 0l6 6h-5a1 1 0 0 1-1-1z"/><rect y="9" width="12" height="12" rx="2" fill="#0d9fc0"/><path fill="#fff" d="M2 18l3-4 2 2 1.500-1.500L10.500 18z"/></svg><span>画像に出力</span></button></li>
      <li><button><svg class="h-[21px] w-[19px]" viewBox="0 0 19 21"><path fill="#fc8f8b" d="M4 0h9l6 6v12a2 2 0 0 1-2 2H4a2 2 0 0 1-2-2V2a2 2 0 0 1 2-2z"/><path fill="#ffd5d2" d="M13 0l6 6h-5a1 1 0 0 1-1-1z"/><rect y="9" width="12" height="12" rx="2" fill="#cf2b22"/><path fill="none" stroke="#fff" stroke-width="1.200" d="M2.500 18.500Q6 16 6 12q0 4.500 4 5-4-.5-7.500 1.500"/></svg><span>PDFにエクスポート</span></button></li>
      <li><button><svg class="h-[21px] w-[19px]" viewBox="0 0 19 21"><path fill="#5b8ef0" d="M4 0h9l6 6v12a2 2 0 0 1-2 2H4a2 2 0 0 1-2-2V2a2 2 0 0 1 2-2z"/><path fill="#b7cffb" d="M13 0l6 6h-5a1 1 0 0 1-1-1z"/><rect y="9" width="12" height="12" rx="2" fill="#154fbe"/><path fill="none" stroke="#fff" stroke-width="1.400" d="M3 13v4.500L6 15l3 2.500V13"/></svg><span>Wordにエクスポート</span></button></li>
      <li><button><svg class="h-[21px] w-[19px]" viewBox="0 0 19 21"><path fill="#fb7a50" d="M4 0h9l6 6v12a2 2 0 0 1-2 2H4a2 2 0 0 1-2-2V2a2 2 0 0 1 2-2z"/><path fill="#ffd0bd" d="M13 0l6 6h-5a1 1 0 0 1-1-1z"/><rect y="9" width="12" height="12" rx="2" fill="#dc4310"/><path fill="none" stroke="#fff" stroke-width="1.400" d="M4 18v-5.500h4V16H4"/></svg><span>スライドに出力</span></button></li>
      <li><button><svg class="h-[21px] w-[19px]" viewBox="0 0 19 21"><path fill="#27b673" d="M4 0h9l6 6v12a2 2 0 0 1-2 2H4a2 2 0 0 1-2-2V2a2 2 0 0 1 2-2z"/><path fill="#a9ebc9" d="M13 0l6 6h-5a1 1 0 0 1-1-1z"/><rect y="9" width="12" height="12" rx="2" fill="#07733f"/><path fill="none" stroke="#fff" stroke-width="1.400" d="M8.500 12.500H4V15h4.500v3H3.500"/></svg><span>Excelにエクスポート</span></button></li>
      <li><button class="[&>svg]:-mx-[3px]"><svg class="size-6 shrink-0 fill-none stroke-[#444] stroke-[1.800px]"><use href="#i-export"/></svg><span class="pl-px">他の形式にエクスポート</span></button></li>
    </ul>
  </div>

  <!-- file menu -->
  <div class="absolute top-[42px] left-[38px] w-[340px] border-[5px] border-[#e81c1e] pt-[35px]">
    <ul class="rounded-tr-md bg-white pt-[4px] pb-[3px] text-[15px] text-[#333] [font-feature-settings:'palt'] [&_button]:grid [&_button]:h-[39px] [&_button]:w-full [&_button]:grid-cols-[38px_188px_62px_16px] [&_button]:items-center [&_button]:pl-[25px] [&_button]:text-left [&_button]:whitespace-nowrap [&_kbd]:font-['Open_Sans'] [&_kbd]:text-[14px] [&_kbd]:text-[#999] [&_svg]:size-6 [&_svg]:fill-none [&_svg]:stroke-[#4a4a4a] [&_svg]:stroke-[1.800px] [&_svg]:text-[#222]">
      <li><button><svg><use href="#i-new"/></svg><span>新規作成</span><i></i><i class="ml-[2px] size-0 border-y-[5px] border-l-[7px] border-y-transparent border-l-[#777]"></i></button></li>
      <li><button class="text-[14px]"><svg><use href="#i-open"/></svg><span>開く</span><kbd>Ctrl+O</kbd></button></li>
      <li><button><svg><use href="#i-save"/></svg><span>保存</span><kbd>Ctrl+S</kbd></button></li>
      <li><button class="text-[14px]"><svg><use href="#i-saveas"/></svg><span>名前を付けて保存</span><kbd>F12</kbd><i class="ml-[2px] size-0 border-y-[5px] border-l-[7px] border-y-transparent border-l-[#777]"></i></button></li>
      <li><button class="text-[13px]"><svg><use href="#i-import"/></svg><span>インポート</span></button></li>
      <li><button class="rounded bg-[#f1f1f1] text-[13px]"><svg><use href="#i-export"/></svg><span>エクスポート</span><i></i><i class="ml-[2px] size-0 border-y-[5px] border-l-[7px] border-y-transparent border-l-[#777]"></i></button></li>
      <li><button><svg><use href="#i-print"/></svg><span>印刷</span><kbd>Ctrl+P</kbd></button></li>
      <li class="my-[5px] h-px bg-[#e8e8e8]"></li>
      <li><button><svg><use href="#i-history"/></svg><span>履歴</span></button></li>
      <li><button class="text-[13px]"><svg><use href="#i-backup"/></svg><span>バックアップセンター</span></button></li>
      <li><button class="text-[13px]"><svg><use href="#i-lock"/></svg><span>ファイルの暗号化</span></button></li>
      <li><button class="text-[13px]"><svg><use href="#i-merge"/></svg><span>他のマインドマップファイルをマージ</span></button></li>
      <li><button class="text-[13px]"><svg><use href="#i-import"/></svg><span>フォルダーパスのインポート</span></button></li>
      <li class="my-[5px] h-px bg-[#e8e8e8]"></li>
      <li><button><svg><use href="#i-share"/></svg><span>共有</span></button></li>
      <li><button><svg><use href="#i-send"/></svg><span>公開</span></button></li>
      <li><button class="text-[13px]"><svg><use href="#i-collab"/></svg><span>コラボレーションモードを有効にする</span></button></li>
      <li class="my-[5px] h-px bg-[#e8e8e8]"></li>
      <li><button><svg><use href="#i-gear"/></svg><span>設定</span></button></li>
    </ul>
  </div>
</div>

<script>
  // Diagonal pencil strokes for the hand-drawn bars
  let seed = 11;
  const rnd = () => (seed = (seed * 16807) % 2147483647) / 2147483647;
  const ns = "http://www.w3.org/2000/svg";
  const pattern = document.getElementById("streaks");
  for (let n = 0; n < 80; n++) {
    const x = rnd() * 430, y = 4 + rnd() * 60, len = Math.min(y, 5 + rnd() * rnd() * 32);
    const line = document.createElementNS(ns, "line");
    line.setAttribute("x1", x);
    line.setAttribute("y1", y);
    line.setAttribute("x2", x + len * 0.8);
    line.setAttribute("y2", y - len);
    line.setAttribute("stroke", "#fff");
    line.setAttribute("stroke-width", "1");
    line.setAttribute("stroke-opacity", 0.1 + rnd() * rnd() * 0.6);
    pattern.appendChild(line);
  }
</script>
</body>
</html>
